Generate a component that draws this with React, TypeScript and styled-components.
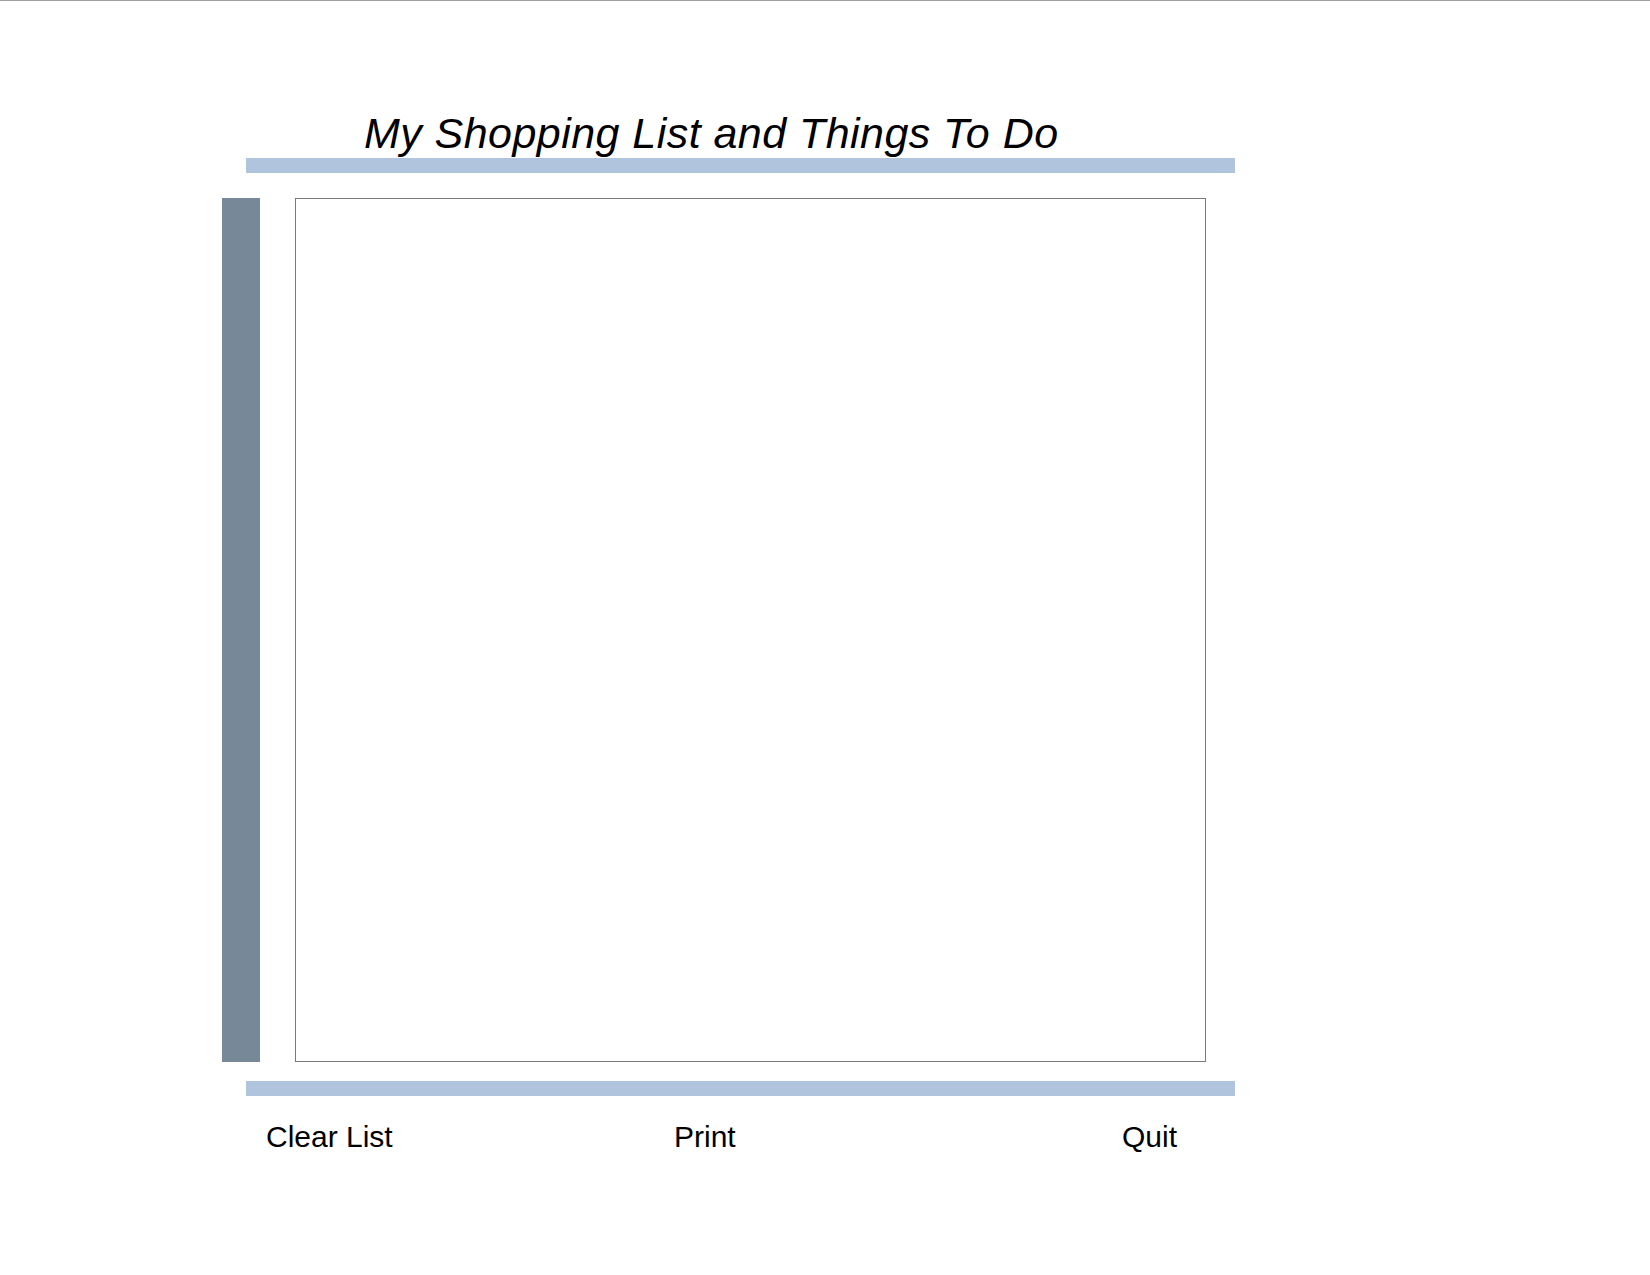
import React from 'react'
import styled, { createGlobalStyle } from 'styled-components'

const GlobalStyle = createGlobalStyle`
  html, body {
    margin: 0;
    padding: 0;
    background: #ffffff;
  }
  body {
    border-top: 1px solid #a0a0a0;
    font-family: "Liberation Sans", Arial, sans-serif;
    color: #000000;
  }
`

const buttons = ['Clear List', 'Print', 'Quit']

const App = () => {
  return (
    <>
      <GlobalStyle />
      <Frame>
        <Title>My Shopping List and Things To Do</Title>
        <Rule $top={1} />
        <Middle>
          <SideBar />
          <ListBox />
        </Middle>
        <Rule $top={19} />
        <ButtonRow>
          {buttons.map((label) => (
            <ActionButton key={label} type="button">
              {label}
            </ActionButton>
          ))}
        </ButtonRow>
      </Frame>
    </>
  )
}

export default App

const Frame = styled.div`
  display: flex;
  flex-direction: column;
  margin-left: 222px;
  width: 1013px;
`
const Title = styled.h1`
  margin: 108px 0 0 0;
  padding-left: 142px;
  font-family: "Liberation Sans", Arial, sans-serif;
  font-style: italic;
  font-weight: normal;
  font-size: 43px;
  line-height: 48px;
  letter-spacing: 0.45px;
  white-space: nowrap;
`
const Rule = styled.div<{ $top: number }>`
  margin-top: ${(p) => p.$top}px;
  margin-left: 24px;
  width: 989px;
  height: 15px;
  background-color: #b0c4de;
`
const Middle = styled.div`
  display: flex;
  flex-direction: row;
  gap: 35px;
  margin-top: 25px;
  height: 864px;
`
const SideBar = styled.div`
  width: 38px;
  background-color: #778899;
`
const ListBox = styled.div`
  box-sizing: border-box;
  width: 911px;
  border: 1px solid #7a7a7a;
  background: #ffffff;
`
const ButtonRow = styled.div`
  display: grid;
  grid-template-columns: 408px 448px auto;
  margin-top: 23px;
  padding-left: 44px;
`
const ActionButton = styled.button`
  justify-self: start;
  margin: 0;
  padding: 0;
  border: none;
  background: transparent;
  font-family: "Liberation Sans", Arial, sans-serif;
  font-size: 30px;
  line-height: 35px;
  color: #000000;
  cursor: pointer;
`
